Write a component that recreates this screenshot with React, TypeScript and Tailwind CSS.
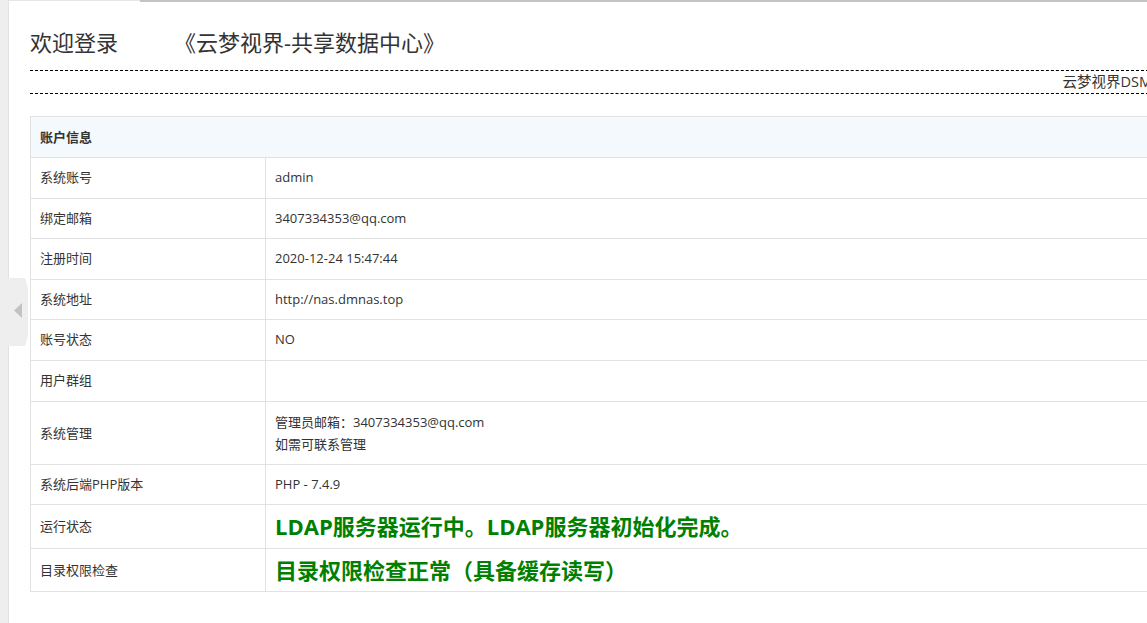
import React from "react";

const rows: { label: string; value: React.ReactNode; kind?: "multi" | "green" }[] = [
  { label: "系统账号", value: "admin" },
  { label: "绑定邮箱", value: "3407334353@qq.com" },
  { label: "注册时间", value: "2020-12-24 15:47:44" },
  { label: "系统地址", value: "http://nas.dmnas.top" },
  { label: "账号状态", value: "NO" },
  { label: "用户群组", value: "" },
  {
    label: "系统管理",
    value: (
      <>
        管理员邮箱：3407334353@qq.com
        <br />
        如需可联系管理
      </>
    ),
    kind: "multi",
  },
  { label: "系统后端PHP版本", value: "PHP - 7.4.9" },
  { label: "运行状态", value: "LDAP服务器运行中。LDAP服务器初始化完成。", kind: "green" },
  { label: "目录权限检查", value: "目录权限检查正常（具备缓存读写）", kind: "green" },
];

export default function App() {
  return (
    <div
      className="relative w-[1147px] h-[623px] overflow-hidden bg-white flex text-[#333]"
      style={{ fontFamily: '"Open Sans", "Noto Sans CJK SC", sans-serif' }}
    >
      <div className="w-[9px] shrink-0 bg-[#eeeeee] border-r border-[#e2e2e2]" />
      <div className="flex flex-col min-w-0 flex-1">
        <div className="flex items-start h-[2px] shrink-0">
          <div className="w-[131px] h-px bg-[#e6e6e6]" />
          <div className="flex-1 h-[2px] bg-[#c4c4c4]" />
        </div>
        <div className="w-[1160px] pl-[21px] shrink-0">
          <div className="mt-[25px] flex items-center text-[22px] leading-[30px] text-[#333]">
            <span>欢迎登录</span>
            <span className="ml-[56px]">《云梦视界-共享数据中心》</span>
          </div>
          <div className="mt-[13px] h-[24px] border-t border-b border-dashed border-black flex items-center justify-end text-[14.5px] leading-[20px] pr-[17px] whitespace-nowrap">
            云梦视界DSM
          </div>
          <table className="mt-[22px] w-[1140px] border-collapse text-[13px]">
            <tbody>
              <tr className="bg-[#f4f9fd]">
                <td colSpan={2} className="border border-[#e2e2e2] px-[9px] py-[10px] leading-[20px] font-bold">
                  账户信息
                </td>
              </tr>
              {rows.map((r) => (
                <tr key={r.label}>
                  <td
                    className={
                      r.kind === "green"
                        ? "w-[235px] border border-[#e2e2e2] px-[9px] py-[10px] leading-[22.5px] align-middle"
                        : r.kind === "multi"
                        ? "w-[235px] border border-[#e2e2e2] px-[9px] py-[9px] leading-[22px] align-middle"
                        : "w-[235px] border border-[#e2e2e2] px-[9px] py-[10px] leading-[19.6px] align-middle"
                    }
                  >
                    {r.label}
                  </td>
                  {r.kind === "green" ? (
                    <td className="border border-[#e2e2e2] px-[9px] py-[10px] leading-[22.5px] text-[22px] font-bold text-[#008000] align-middle whitespace-nowrap">
                      {r.value}
                    </td>
                  ) : r.kind === "multi" ? (
                    <td className="border border-[#e2e2e2] px-[9px] py-[9px] leading-[22px] align-middle">
                      {r.value}
                    </td>
                  ) : (
                    <td className="border border-[#e2e2e2] px-[9px] py-[10px] leading-[19.6px] align-middle">
                      {r.value}
                    </td>
                  )}
                </tr>
              ))}
            </tbody>
          </table>
        </div>
      </div>
      <div className="absolute left-[8px] top-[278px] w-[20px] h-[68px]">
        <svg width="20" height="68" viewBox="0 0 20 68">
          <path d="M0 0 L17 0 L20 10 L20 58 L17 68 L0 68 Z" fill="#eeeeee" />
          <path d="M14 25 L6 32.5 L14 40 Z" fill="#c2c2c2" />
        </svg>
      </div>
    </div>
  );
}
